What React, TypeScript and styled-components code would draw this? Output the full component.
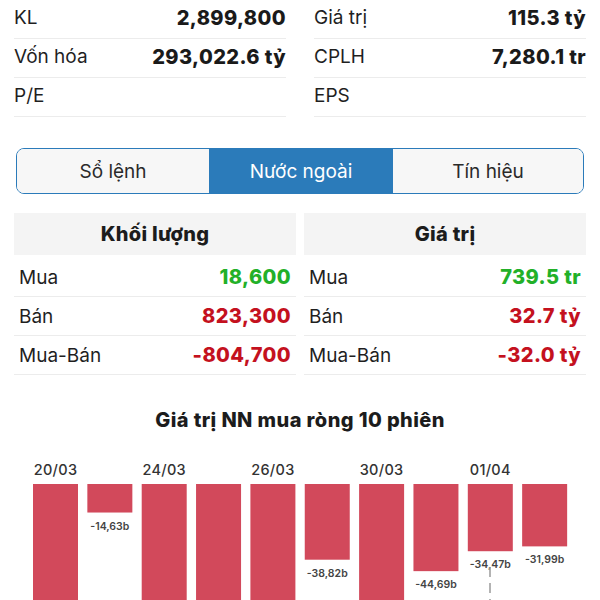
import React from 'react'
import styled, { createGlobalStyle } from 'styled-components'

const Global = createGlobalStyle`
    body {
        margin: 0;
        background: #fff;
        font-family: Inter, "Noto Sans", sans-serif;
        color: #1c1c1c;
        overflow: hidden;
    }
`

const Page = styled.div`
    width: 600px;
    padding: 0 14px;
    box-sizing: border-box;
`

const InfoGrid = styled.div`
    display: grid;
    grid-template-columns: 1fr 1fr;
    column-gap: 28px;
`

const InfoRow = styled.div`
    height: 39px;
    display: flex;
    align-items: center;
    justify-content: space-between;
    padding-bottom: 3px;
    box-sizing: border-box;
    border-bottom: 1px solid #ececec;
    font-size: 19px;
`

const Label = styled.span`
    font-weight: 400;
    color: #1f1f1f;
`

const Value = styled.span<{ $tone?: 'up' | 'down' }>`
    font-size: 20px;
    font-weight: 800;
    letter-spacing: 0.4px;
    color: ${p => (p.$tone === 'up' ? '#22b028' : p.$tone === 'down' ? '#c4111e' : '#1a1a1a')};
`

const Tabs = styled.div`
    margin: 31px 2px 0;
    height: 46px;
    display: grid;
    grid-template-columns: 192px 184px 1fr;
    border: 1.5px solid #2b7bba;
    border-radius: 8px;
    overflow: hidden;
    box-sizing: border-box;
`

const Tab = styled.div<{ $active?: boolean }>`
    display: flex;
    align-items: center;
    justify-content: center;
    font-size: 19px;
    color: ${p => (p.$active ? '#fff' : '#2a2a2a')};
    background: ${p => (p.$active ? '#2b7bba' : '#f7f7f7')};
`

const Tables = styled.div`
    margin-top: 19px;
    display: grid;
    grid-template-columns: 1fr 1fr;
    column-gap: 8px;
`

const TableHead = styled.div`
    height: 42px;
    background: #f4f4f4;
    display: flex;
    align-items: center;
    justify-content: center;
    font-size: 20px;
    font-weight: 800;
    letter-spacing: 0.3px;
`

const TableRow = styled(InfoRow)`
    height: 39px;
    padding: 0 5px;

    &:nth-child(2) {
        height: 42px;
        padding-top: 3px;
    }
`

const ChartTitle = styled.div`
    margin-top: 33px;
    text-align: center;
    font-size: 20px;
    font-weight: 800;
    letter-spacing: 0.4px;
`

const ChartSvg = styled.svg`
    display: block;
    margin: 18px 0 0 -14px;
`

type Side = { title: string; rows: [string, string, 'up' | 'down'][] }

const sides: Side[] = [
    {
        title: 'Khối lượng',
        rows: [
            ['Mua', '18,600', 'up'],
            ['Bán', '823,300', 'down'],
            ['Mua-Bán', '-804,700', 'down'],
        ],
    },
    {
        title: 'Giá trị',
        rows: [
            ['Mua', '739.5 tr', 'up'],
            ['Bán', '32.7 tỷ', 'down'],
            ['Mua-Bán', '-32.0 tỷ', 'down'],
        ],
    },
]

const sessions = [
    { date: '20/03', value: -95.2 },
    { date: '', value: -14.63 },
    { date: '24/03', value: -88.4 },
    { date: '', value: -91.7 },
    { date: '26/03', value: -102.3 },
    { date: '', value: -38.82 },
    { date: '30/03', value: -76.5 },
    { date: '', value: -44.69 },
    { date: '01/04', value: -34.47 },
    { date: '', value: -31.99 },
]

const Chart = () => {
    const height = 160
    const top = 34
    const scale = 1.95
    return (
        <ChartSvg width={600} height={height}>
            {sessions.map((s, i) => {
                const x = 33 + i * 54.35
                const h = -s.value * scale
                const labelY = top + h + 17
                return (
                    <g key={i}>
                        {s.date && (
                            <text x={x + 22.5} y={25} textAnchor="middle" fontSize={14.5} fontWeight={500} fill="#333" letterSpacing={0.3}>
                                {s.date}
                            </text>
                        )}
                        <rect x={x} y={top} width={45} height={h} fill="#d2495b" />
                        {labelY < height - 10 && (
                            <text x={x + 22.5} y={labelY} textAnchor="middle" fontSize={10.5} fontWeight={600} fill="#444">
                                {s.value.toFixed(2).replace('.', ',')}b
                            </text>
                        )}
                    </g>
                )
            })}
            <line x1={490} y1={117} x2={490} y2={height} stroke="#9a9a9a" strokeWidth={1.5} strokeDasharray="10 6" />
        </ChartSvg>
    )
}

const App: React.FC = () => {
    return (
        <>
            <Global />
            <Page>
                <InfoGrid>
                    <InfoRow><Label>KL</Label><Value>2,899,800</Value></InfoRow>
                    <InfoRow><Label>Giá trị</Label><Value>115.3 tỷ</Value></InfoRow>
                    <InfoRow><Label>Vốn hóa</Label><Value>293,022.6 tỷ</Value></InfoRow>
                    <InfoRow><Label>CPLH</Label><Value>7,280.1 tr</Value></InfoRow>
                    <InfoRow><Label>P/E</Label><Value></Value></InfoRow>
                    <InfoRow><Label>EPS</Label><Value></Value></InfoRow>
                </InfoGrid>

                <Tabs>
                    <Tab>Sổ lệnh</Tab>
                    <Tab $active>Nước ngoài</Tab>
                    <Tab>Tín hiệu</Tab>
                </Tabs>

                <Tables>
                    {sides.map(side => (
                        <div key={side.title}>
                            <TableHead>{side.title}</TableHead>
                            {side.rows.map(([label, value, tone]) => (
                                <TableRow key={label}>
                                    <Label>{label}</Label>
                                    <Value $tone={tone}>{value}</Value>
                                </TableRow>
                            ))}
                        </div>
                    ))}
                </Tables>

                <ChartTitle>Giá trị NN mua ròng 10 phiên</ChartTitle>
                <Chart />
            </Page>
        </>
    )
}

export default App
